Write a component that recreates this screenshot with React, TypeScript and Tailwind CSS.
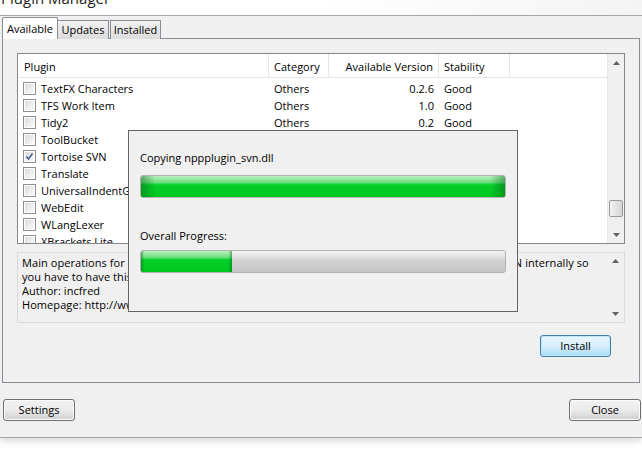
import React from 'react';

const FONT = { fontFamily: '"Open Sans", "Noto Sans", sans-serif' };

type Plugin = { name: string; category?: string; version?: string; stability?: string; checked?: boolean };

const PLUGINS: Plugin[] = [
  { name: 'TextFX Characters', category: 'Others', version: '0.2.6', stability: 'Good' },
  { name: 'TFS Work Item', category: 'Others', version: '1.0', stability: 'Good' },
  { name: 'Tidy2', category: 'Others', version: '0.2', stability: 'Good' },
  { name: 'ToolBucket' },
  { name: 'Tortoise SVN', checked: true },
  { name: 'Translate' },
  { name: 'UniversalIndentGUI' },
  { name: 'WebEdit' },
  { name: 'WLangLexer' },
  { name: 'XBrackets Lite' },
];

const DESCRIPTION =
  'Main operations for SVN under Notepad++. This plugin uses TortoiseProc.exe of the TortoiseSVN internally so\n' +
  'you have to have this software installed.\n' +
  'Author: incfred\n' +
  'Homepage: http://www.incfred.com/';

function Checkbox({ checked }: { checked?: boolean }) {
  return (
    <span className="w-[13px] h-[13px] border border-[#8f8f8f] bg-white p-[1px] shrink-0 flex">
      <span className="flex-1 bg-gradient-to-br from-[#dcdcdc] to-[#fbfbfb] flex items-center justify-center">
        {checked && (
          <svg width="9" height="9" viewBox="0 0 9 9">
            <path d="M1.5 4.5 L3.5 7 L7.5 1.5" fill="none" stroke="#4a5f97" strokeWidth="1.6" />
          </svg>
        )}
      </span>
    </span>
  );
}

function Arrow({ up }: { up?: boolean }) {
  return (
    <svg width="7" height="4" viewBox="0 0 7 4">
      <path d={up ? 'M0 4 L3.5 0 L7 4 Z' : 'M0 0 L3.5 4 L7 0 Z'} fill="#606060" />
    </svg>
  );
}

function WinButton({ label, active, className }: { label: string; active?: boolean; className?: string }) {
  return (
    <div
      className={
        'h-[22px] rounded-[3px] border flex items-center justify-center text-[11px] text-black ' +
        (active
          ? 'border-[#3c7fb1] bg-gradient-to-b from-[#eaf6fd] via-[#d9f0fc] to-[#a7d9f5] shadow-[inset_0_0_0_1px_#c1e6f9] '
          : 'border-[#707070] bg-gradient-to-b from-[#f2f2f2] via-[#ebebeb] to-[#cfcfcf] shadow-[inset_0_0_0_1px_#fcfcfc] ') +
        (className ?? '')
      }
    >
      {label}
    </div>
  );
}

function ProgressBar({ pct }: { pct: number }) {
  return (
    <div className="h-[23px] rounded-[3px] border border-[#b2b2b2] bg-gradient-to-b from-[#f3f3f3] via-[#d0d0d0] to-[#c6c6c6] overflow-hidden flex">
      <div
        className="h-full bg-[linear-gradient(to_bottom,#b8f0bf_0%,#6ee07e_30%,#06cf2a_42%,#00c81f_100%)] relative"
        style={{ width: `${pct}%` }}
      >
        <div className="absolute inset-0 bg-[linear-gradient(to_right,rgba(0,90,20,0.45)_0%,rgba(0,90,20,0)_4%,rgba(0,90,20,0)_96%,rgba(0,90,20,0.45)_100%)]" />
      </div>
    </div>
  );
}

export default function App() {
  return (
    <div className="w-[642px] h-[455px] bg-white relative overflow-hidden text-black" style={FONT}>
      {/* title bar */}
      <div className="h-[15px] overflow-hidden bg-gradient-to-r from-white via-white to-[#f4f4f4]">
        <div className="text-[15px] leading-[15px] -mt-[9px] pl-[1px] text-[#1e1e1e]">Plugin Manager</div>
      </div>

      {/* window body */}
      <div className="h-[423px] border-y border-[#a7a7a7] bg-[#f0f0f0] flex flex-col shadow-[0_4px_6px_rgba(0,0,0,0.12)]">
        {/* tabs */}
        <div className="flex items-end pl-[2px] pt-[1px] h-[23px] relative z-10">
          <div className="h-[22px] w-[56px] bg-white border border-b-0 border-[#898c95] rounded-t-[2px] text-[11px] flex justify-center pt-[3px]">
            Available
          </div>
          <div className="h-[19px] w-[51px] bg-gradient-to-b from-[#f2f2f2] to-[#dcdcdc] border border-l-0 border-b-0 border-[#898c95] text-[11px] flex items-center justify-center">
            Updates
          </div>
          <div className="h-[19px] w-[51px] ml-[1px] bg-gradient-to-b from-[#f2f2f2] to-[#dcdcdc] border border-b-0 border-[#898c95] text-[11px] flex items-center justify-center">
            Installed
          </div>
        </div>

        {/* tab panel */}
        <div className="ml-[2px] w-[638px] h-[345px] -mt-px border border-[#898c95] bg-[#f0f0f0] px-[14px] pt-[14px] flex flex-col">
          {/* list view */}
          <div className="h-[191px] border border-[#828790] bg-white flex overflow-hidden">
            <div className="flex-1 flex flex-col overflow-hidden">
              <div className="h-[24px] flex text-[11px] border-b border-[#e5e5e5] shrink-0">
                <div className="w-[251px] pl-[6px] pt-[5px] border-r border-[#e5e5e5]">Plugin</div>
                <div className="w-[60px] pl-[5px] pt-[5px] border-r border-[#e5e5e5]">Category</div>
                <div className="w-[110px] pr-[5px] pt-[5px] text-right border-r border-[#e5e5e5]">Available Version</div>
                <div className="w-[71px] pl-[5px] pt-[5px] border-r border-[#e5e5e5]">Stability</div>
              </div>
              <div className="pt-[2px]">
                {PLUGINS.map((p) => (
                  <div key={p.name} className="h-[17px] flex items-center text-[11px] leading-none">
                    <div className="w-[251px] pl-[5px] flex items-center gap-[5px] whitespace-nowrap">
                      <Checkbox checked={p.checked} />
                      <span>{p.name}</span>
                    </div>
                    <div className="w-[60px] pl-[5px]">{p.category}</div>
                    <div className="w-[110px] pr-[5px] text-right">{p.version}</div>
                    <div className="w-[71px] pl-[5px]">{p.stability}</div>
                  </div>
                ))}
              </div>
            </div>
            {/* scrollbar */}
            <div className="w-[17px] bg-[#f0f0f0] border-l border-[#e8e8e8] flex flex-col items-center shrink-0">
              <div className="h-[17px] flex items-center justify-center">
                <Arrow up />
              </div>
              <div className="flex-1 w-full flex flex-col justify-end pb-[9px]">
                <div className="h-[17px] mx-[1px] rounded-[2px] border border-[#9a9a9a] bg-gradient-to-r from-[#f3f3f3] to-[#d5d5d5]" />
              </div>
              <div className="h-[17px] flex items-center justify-center">
                <Arrow />
              </div>
            </div>
          </div>

          {/* description */}
          <div className="mt-[8px] h-[71px] border border-[#dadada] bg-[#f0f0f0] flex">
            <div className="flex-1 pl-[4px] pt-[3px] text-[11px] leading-[14px] tracking-[0.07px] whitespace-pre overflow-hidden">
              {DESCRIPTION}
            </div>
            <div className="w-[17px] flex flex-col items-center justify-between py-[6px] shrink-0">
              <Arrow up />
              <Arrow />
            </div>
          </div>

          <div className="flex justify-end mt-[12px] pr-[14px]">
            <WinButton label="Install" active className="w-[71px]" />
          </div>
        </div>

        {/* bottom buttons */}
        <div className="flex justify-between pl-[3px] pr-[1px] mt-[16px]">
          <WinButton label="Settings" className="w-[72px]" />
          <WinButton label="Close" className="w-[72px]" />
        </div>
      </div>

      {/* progress dialog */}
      <div className="absolute left-[128px] top-[130px] w-[390px] h-[182px] border border-[#646464] bg-[#f0f0f0] px-[11px]">
        <div className="text-[11px] mt-[20px] leading-[14px]">Copying nppplugin_svn.dll</div>
        <div className="mt-[10px]">
          <ProgressBar pct={100} />
        </div>
        <div className="text-[11px] mt-[31px] leading-[14px]">Overall Progress:</div>
        <div className="mt-[7px]">
          <ProgressBar pct={25} />
        </div>
      </div>
    </div>
  );
}
